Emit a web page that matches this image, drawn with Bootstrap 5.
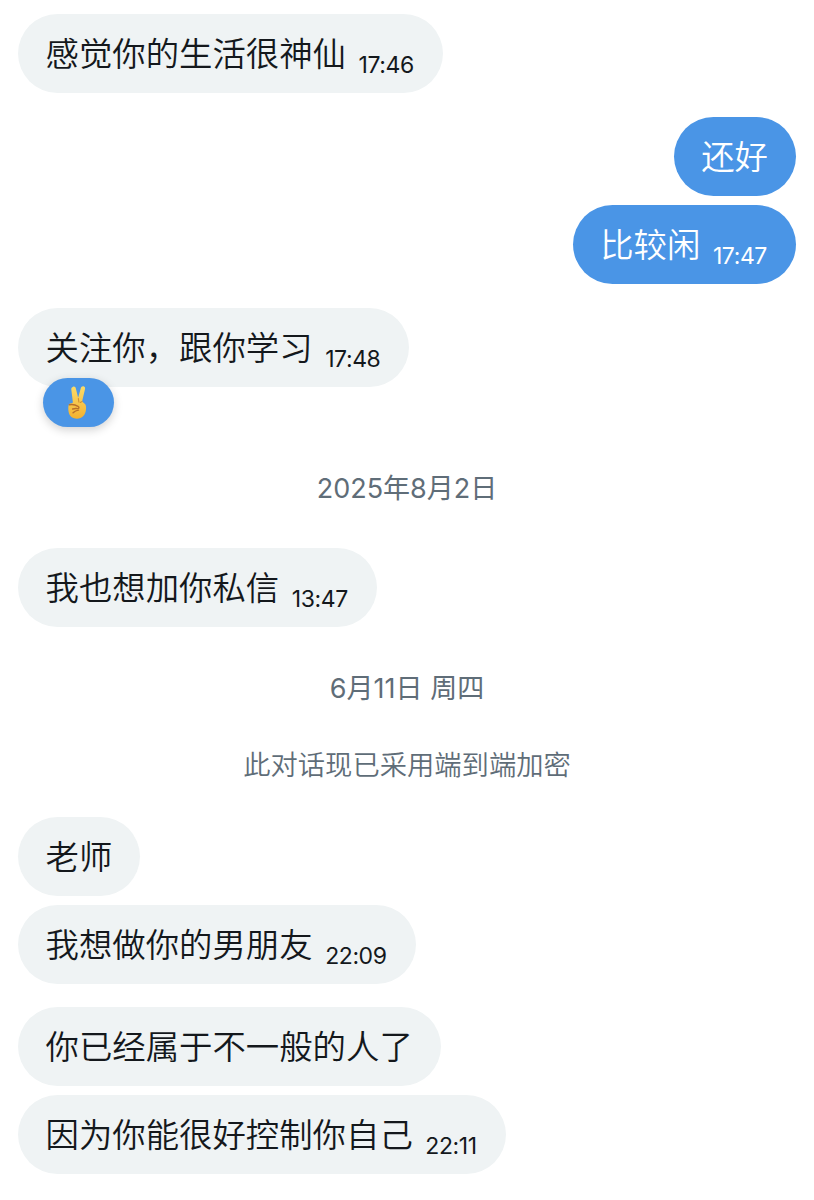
<!DOCTYPE html>
<html lang="zh-CN">
<head>
  <meta charset="UTF-8">
  <title>对话</title>
  <meta name="viewport" content="width=device-width, initial-scale=1">
  <link href="https://cdn.jsdelivr.net/npm/bootstrap@5.3.3/dist/css/bootstrap.min.css" rel="stylesheet">
  <style>
    body { background: #fff; font-family: Inter, "Noto Sans CJK SC", sans-serif; color: #14181c; }
    .chat-wrap { width: 814px; height: 1200px; overflow: hidden; padding: 14px 18px 0; }
    .bubble { height: 79px; border-radius: 40px; padding: 0 28px 0 27.500px; font-size: 33.4px; line-height: 76px; white-space: nowrap; font-family: "Noto Sans CJK SC", sans-serif; font-weight: 350; }
    .bubble-in { background: #eff3f4; }
    .bubble-out { background: #4a95e6; color: #fff; }
    .stamp { font-family: Inter, sans-serif; font-size: 23px; font-weight: 400; margin: 0 1px 0 12.500px; letter-spacing: -.4px; position: relative; top: 7px; }
    .day-label { text-align: center; color: #5f6d78; font-size: 27px; line-height: 36px; font-family: Inter, "Noto Sans CJK SC", sans-serif; }
    .notice-label { text-align: center; color: #5f6d78; font-size: 27.3px; line-height: 36px; font-family: "Noto Sans CJK SC", sans-serif; font-weight: 350; }
    .reaction { position: absolute; left: 25px; top: 70px; width: 71px; height: 49px; border-radius: 25px; background: #4a95e6; box-shadow: 0 3px 10px rgba(0,0,0,.18); }
    .gap-s { margin-top: 9px; }
    .gap-m { margin-top: 24px; }
    .gap-t { margin-top: 23px; }
    .mt-day1 { margin-top: 84px; }
    .mt-msg1 { margin-top: 41px; }
    .mt-day2 { margin-top: 44px; }
    .mt-notice { margin-top: 38px; }
    .mt-msg2 { margin-top: 36px; }
  </style>
</head>
<body>
  <div class="chat-wrap d-flex flex-column">
    <div class="d-flex"><div class="bubble bubble-in">感觉你的生活很神仙<span class="stamp">17:46</span></div></div>

    <div class="d-flex justify-content-end gap-m"><div class="bubble bubble-out">还好</div></div>
    <div class="d-flex justify-content-end gap-s"><div class="bubble bubble-out">比较闲<span class="stamp">17:47</span></div></div>

    <div class="d-flex position-relative gap-m">
      <div class="bubble bubble-in">关注你，跟你学习<span class="stamp">17:48</span></div>
      <div class="reaction d-flex align-items-center justify-content-center">
        <svg width="27" height="35" viewBox="0 0 30 38">
          <defs>
            <linearGradient id="handFill" x1="0" y1="0" x2="0" y2="1">
              <stop offset="0" stop-color="#fbdc6a"/>
              <stop offset="1" stop-color="#f3b12f"/>
            </linearGradient>
          </defs>
          <path d="M9 1.500c1.600-.6 2.600.3 3 1.800l2.600 10.500L17.600 3c.5-1.600 1.600-2.400 3-2 1.500.4 2 1.700 1.600 3.200L19 18l3.500 3c1.300 1.800 1.500 8-1 11.500-2 3-5 4.500-8.500 4.500-4 0-7.500-2.300-8.600-6-.8-2.700-1-6.500-.4-9 .4-1.600 1.800-2.500 3.500-2.200L8.800 19 7 4.500C6.800 3 7.700 2 9 1.500z" fill="url(#handFill)"/>
          <path d="M5 21.500c3-.6 6.500 0 9.500 1.800 1.500.9 1.200 2.500-.5 2.500-2 0-3.500-.3-5.500.4M9 30.500c1.500-1.700 3.500-2.800 6-3" fill="none" stroke="#b9702a" stroke-width="1.600" stroke-linecap="round"/>
          <path d="M14.800 14.500l.6 4M19 18l-2 1" fill="none" stroke="#d18d33" stroke-width="1.200" stroke-linecap="round"/>
        </svg>
      </div>
    </div>

    <div class="day-label mt-day1">2025年8月2日</div>
    <div class="d-flex mt-msg1"><div class="bubble bubble-in">我也想加你私信<span class="stamp">13:47</span></div></div>
    <div class="day-label mt-day2">6月11日 周四</div>
    <div class="notice-label mt-notice">此对话现已采用端到端加密</div>

    <div class="d-flex mt-msg2"><div class="bubble bubble-in">老师</div></div>
    <div class="d-flex gap-s"><div class="bubble bubble-in">我想做你的男朋友<span class="stamp">22:09</span></div></div>
    <div class="d-flex gap-t"><div class="bubble bubble-in">你已经属于不一般的人了</div></div>
    <div class="d-flex gap-s"><div class="bubble bubble-in">因为你能很好控制你自己<span class="stamp">22:11</span></div></div>
  </div>
  <script src="https://cdn.jsdelivr.net/npm/bootstrap@5.3.3/dist/js/bootstrap.bundle.min.js"></script>
</body>
</html>
